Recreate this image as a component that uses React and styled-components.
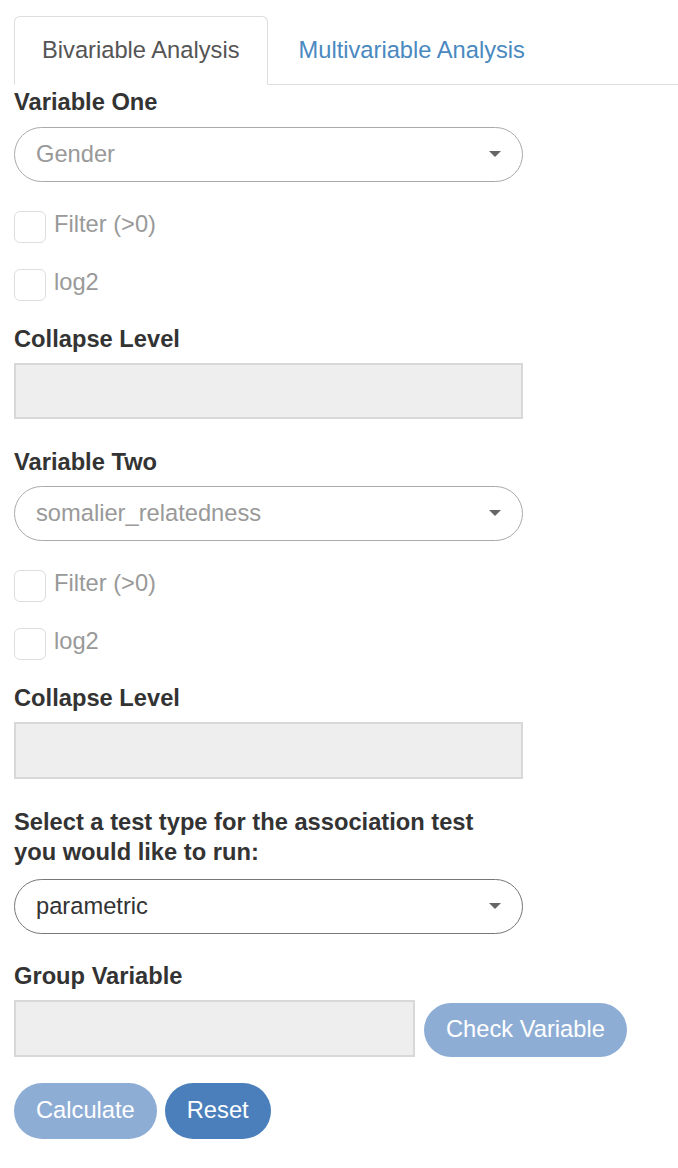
import React from "react";
import styled, { createGlobalStyle } from "styled-components";

const GlobalStyle = createGlobalStyle`
    html, body { margin: 0; padding: 0; background: #fff; }
    body { font-family: "Liberation Sans", Arial, sans-serif; color: #333; }
`;

const Page = styled.div`
    padding: 16px 0 0 14px;
`;

const Tabs = styled.div`
    display: flex; border-bottom: 1.5px solid #ddd;
`;

const Tab = styled.div`
    height: 69px; box-sizing: border-box; padding: 0 27px; margin-right: 3px;
    display: flex; align-items: center; font-size: 23.7px; margin-bottom: -1.5px;
    border: 1.5px solid ${p => (p.active ? "#ddd" : "transparent")};
    border-bottom-color: ${p => (p.active ? "#fff" : "transparent")};
    border-radius: 6px 6px 0 0; background: ${p => (p.active ? "#fff" : "transparent")};
    color: ${p => (p.active ? "#555" : "#4a89c0")};
`;

const Form = styled.div`
    display: flex; flex-direction: column; align-items: flex-start;
`;

const Label = styled.div`
    font-weight: bold; font-size: 23.7px; line-height: 30px;
    margin-top: ${p => p.top}px; margin-bottom: ${p => p.bottom ?? 9}px; max-width: 480px;
`;

const Select = styled.div`
    width: 509px; height: 55px; box-sizing: border-box; border-radius: 28px; position: relative;
    border: 1.5px solid ${p => (p.dark ? "#777" : "#aaa")};
    display: flex; align-items: center; padding-left: 21px; font-size: 23.7px;
    color: ${p => (p.dark ? "#333" : "#999")};
`;

const Caret = styled.span`
    position: absolute; right: 21px; top: 50%; margin-top: -3px;
    border-left: 6px solid transparent; border-right: 6px solid transparent;
    border-top: 6px solid #666;
`;

const CheckRow = styled.label`
    display: flex; align-items: flex-start; gap: 8px; margin-top: ${p => p.top}px;
    font-size: 23.7px; line-height: 30px; color: #999;
`;

const Box = styled.span`
    width: 32px; height: 32px; box-sizing: border-box; margin-top: 2px;
    border: 1.5px solid #ddd; border-radius: 6px; background: #fff;
`;

const Input = styled.div`
    flex-shrink: 0; height: ${p => p.h ?? 56}px; box-sizing: border-box; width: ${p => p.w ?? 509}px;
    background: #eee; border: 2px solid #d8d8d8;
`;

const Row = styled.div`
    display: flex; align-items: flex-end; gap: ${p => p.gap}px; margin-top: ${p => p.top ?? 0}px;
`;

const Button = styled.div`
    flex-shrink: 0; height: ${p => p.h ?? 56}px; box-sizing: border-box; padding: 0 22px;
    display: flex; align-items: center; border-radius: 28px; white-space: nowrap;
    font-size: 23.7px; color: #fff; background: ${p => (p.primary ? "#4a7fbc" : "#8eadd5")};
`;

function Checkbox({ top, children }) {
    return (
        <CheckRow top={top}>
            <Box />
            {children}
        </CheckRow>
    );
}

export default function App() {
    return (
        <Page>
            <GlobalStyle />
            <Tabs>
                <Tab active>Bivariable Analysis</Tab>
                <Tab>Multivariable Analysis</Tab>
            </Tabs>
            <Form>
                <Label top={2} bottom={10}>Variable One</Label>
                <Select>Gender<Caret /></Select>
                <Checkbox top={27}>Filter (&gt;0)</Checkbox>
                <Checkbox top={24}>log2</Checkbox>
                <Label top={23}>Collapse Level</Label>
                <Input />

                <Label top={28} bottom={9}>Variable Two</Label>
                <Select>somalier_relatedness<Caret /></Select>
                <Checkbox top={27}>Filter (&gt;0)</Checkbox>
                <Checkbox top={24}>log2</Checkbox>
                <Label top={23}>Collapse Level</Label>
                <Input h={57} />

                <Label top={28} bottom={12}>Select a test type for the association test you would like to run:</Label>
                <Select dark>parametric<Caret /></Select>
                <Label top={27}>Group Variable</Label>
                <Row gap={9}>
                    <Input w={401} h={57} />
                    <Button h={54}>Check Variable</Button>
                </Row>
                <Row gap={8} top={26}>
                    <Button>Calculate</Button>
                    <Button primary>Reset</Button>
                </Row>
            </Form>
        </Page>
    );
}
